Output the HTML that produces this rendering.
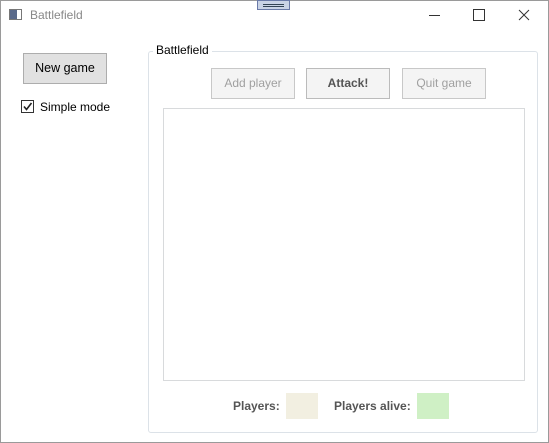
<!DOCTYPE html>
<html><head><style>
body{margin:0;width:549px;height:443px;background:#fff;font-family:"Segoe UI","Liberation Sans",sans-serif;font-size:12px;position:relative;overflow:hidden}
.a{position:absolute}
.win{left:0;top:0;width:547px;height:441px;border:1px solid #9a9a9a}
.btn{position:absolute;border:1px solid #c8c8c8;background:#f4f4f4;color:#a0a0a0;text-align:center;box-sizing:border-box;font-size:12px}
</style></head><body>
<div class="a win"></div>
<div class="a" style="left:9px;top:9px;width:13px;height:11px;border:1px solid #777;background:#fff;box-sizing:border-box"><div style="width:7px;height:9px;background:#5a6a8a"></div></div>
<div class="a" style="left:30px;top:8px;color:#888;font-size:12px">Battlefield</div>
<div class="a" style="left:257px;top:0;width:33px;height:10px;background:#c9d3e6;border:1px solid #6a7aa8;box-sizing:border-box"><div style="margin:3px 5px;height:1px;border-top:1px solid #345;border-bottom:1px solid #345"></div></div>
<div class="a" style="left:429px;top:15px;width:11px;height:1px;background:#333"></div>
<div class="a" style="left:473px;top:9px;width:10px;height:10px;border:1px solid #333"></div>
<svg class="a" style="left:518px;top:9px" width="12" height="12"><path d="M1 1L11 11M11 1L1 11" stroke="#333" stroke-width="1"/></svg>
<div class="btn" style="left:23px;top:53px;width:84px;height:31px;background:#e1e1e1;border-color:#adadad;color:#000;line-height:29px;font-size:12.5px">New game</div>
<div class="a" style="left:21px;top:100px;width:13px;height:13px;border:1px solid #333;box-sizing:border-box"></div>
<svg class="a" style="left:21px;top:100px" width="13" height="13"><path d="M3 6.5L5.5 9.5L10.5 3" stroke="#222" stroke-width="1.6" fill="none"/></svg>
<div class="a" style="left:40px;top:100px;font-size:12px">Simple mode</div>
<div class="a" style="left:148px;top:51px;width:390px;height:382px;border:1px solid #dce2e8;border-radius:3px;box-sizing:border-box"></div>
<div class="a" style="left:153px;top:43px;background:#fff;padding:0 3px;font-size:12px">Battlefield</div>
<div class="btn" style="left:211px;top:68px;width:84px;height:31px;line-height:29px">Add player</div>
<div class="btn" style="left:306px;top:68px;width:84px;height:31px;line-height:29px;color:#555;font-weight:bold;background:#f4f4f4;border-color:#bbb">Attack!</div>
<div class="btn" style="left:402px;top:68px;width:84px;height:31px;line-height:29px">Quit game</div>
<div class="a" style="left:163px;top:108px;width:362px;height:273px;border:1px solid #d8dadc;box-sizing:border-box"></div>
<div class="a" style="left:233px;top:399px;font-weight:bold;color:#555">Players:</div>
<div class="a" style="left:286px;top:393px;width:32px;height:26px;background:#f2efe1"></div>
<div class="a" style="left:334px;top:399px;font-weight:bold;color:#555">Players alive:</div>
<div class="a" style="left:417px;top:393px;width:32px;height:26px;background:#cff0c5"></div>
</body></html>
